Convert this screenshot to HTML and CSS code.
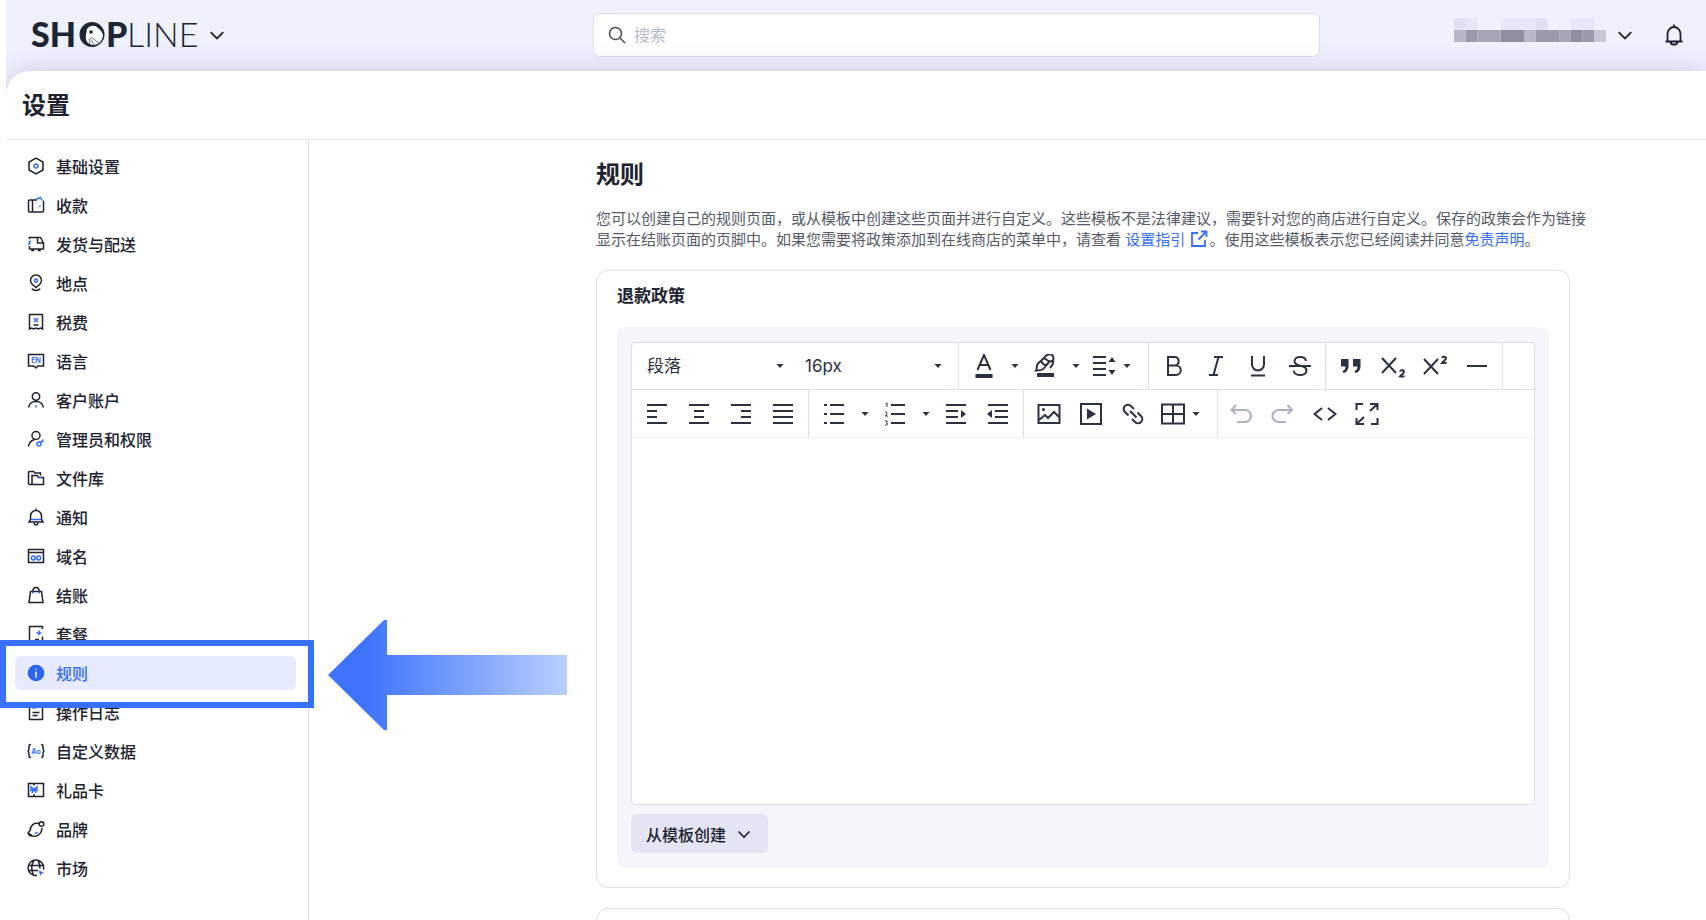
FILE: index.html
```html
<!DOCTYPE html>
<html lang="zh-CN">
    <head>
        <meta charset="UTF-8">
        <meta name="viewport" content="width=device-width, initial-scale=1.0">
        <title>设置 - 规则</title>
        <link rel="stylesheet" href="styles.css">
    </head>
    <body>
        <svg class="symbols" aria-hidden="true">
            <symbol id="chevron" viewBox="0 0 14 14"><path d="M1.5 4.5 7 10l5.500-5.500"/></symbol>
            <symbol id="caret" viewBox="0 0 8 6"><path d="M0.500 1h7L4 5z"/></symbol>
        </svg>

        <div class="app">
            <header class="topbar">
                <button class="brand" type="button" aria-label="SHOPLINE">
                    <svg class="logo" viewBox="0 -9 168 48">
                        <text class="logo-bold" x="0" y="27">SH</text>
                        <circle cx="61" cy="14.500" r="12.500" fill="#1d2733"/>
                        <path d="M56 9c3-4 8-4 11-1 3 2 5 5 5 8-1 5-4 9-10 9-6-1-8-5-7-10z" fill="#fff"/>
                        <circle cx="60" cy="12" r="1.800" fill="#1d2733"/>
                        <path d="M59 18l4 7M60 17l8 6M58 19l1 5" stroke="#1d2733" stroke-width=".6" fill="none"/>
                        <text class="logo-bold" x="75" y="27">P</text>
                        <text class="logo-light" x="96" y="27">LINE</text>
                    </svg>
                    <svg class="chevron" width="16" height="16"><use href="#chevron"/></svg>
                </button>
                <label class="search">
                    <svg width="18" height="18" viewBox="0 0 18 18"><circle cx="7.500" cy="7.500" r="6"/><path d="M12 12l5 5"/></svg>
                    <input type="search" placeholder="搜索" aria-label="搜索">
                </label>
                <div class="account">
                    <button class="user" type="button" aria-label="账户">
                        <svg class="user-mask" width="152" height="24" viewBox="0 0 156 24" preserveAspectRatio="none">
                            <path fill="#dfe1ee" d="M0 0h12v12H0zM84 0h12v12H84z"/>
                            <path fill="#e6e8f5" d="M12 0h12v12H12zM48 0h36v12H48zM120 0h24v12H120z"/>
                            <path fill="#b7b8c7" d="M0 12h12v12H0zM72 12h12v12H72z"/>
                            <path fill="#9a9aa8" d="M12 12h12v12H12zM84 12h24v12H84zM132 12h12v12H132z"/>
                            <path fill="#a5a6b4" d="M24 12h24v12H24zM108 12h12v12H108z"/>
                            <path fill="#8e8e9d" d="M48 12h24v12H48zM120 12h12v12H120z"/>
                            <path fill="#c6c7d6" d="M144 12h12v12H144z"/>
                        </svg>
                        <svg class="chevron" width="16" height="16"><use href="#chevron"/></svg>
                    </button>
                    <button class="bell" type="button" aria-label="通知">
                        <svg width="20" height="24" viewBox="0 0 20 24"><path d="M10 1.500v2M1.500 18.500h17M3.500 18.500V11a6.500 7 0 0 1 13 0v7.500M6.500 19c.5 3.500 6.500 3.500 7 0"/></svg>
                    </button>
                </div>
            </header>

            <div class="page">
                <h1 class="page-title">设置</h1>
                <div class="columns">
                    <nav class="sidebar">
                        <ul>
                            <li><a href="#"><svg viewBox="0 0 18 18"><path d="M9 1.200l7 3.800v8l-7 3.800L2 13V5z"/><circle class="blue" cx="9" cy="9" r="2"/></svg>基础设置</a></li>
                            <li><a href="#"><svg viewBox="0 0 18 18"><path d="M10 4H2.500a1 1 0 0 0-1 1v10a1 1 0 0 0 1 1h13a1 1 0 0 0 1-1V4.500M5.500 4v12"/><path class="blue" d="M8.500 3.500l5-2 1.500 3M13 9.500v1.500"/></svg>收款</a></li>
                            <li><a href="#"><svg viewBox="0 0 18 18"><path d="M2.500 4V2.500h8V8h6v6h-14v-3M10.500 2.500h3L16.500 8M5 14v1.500h1.500V14M11.500 14v1.500H13V14"/><path class="blue" d="M1 9h1.500V6.500h1.500"/></svg>发货与配送</a></li>
                            <li><a href="#"><svg viewBox="0 0 18 18"><path d="M9 13.500C5.500 11 3.500 9 3.500 6.500a5.500 5.500 0 0 1 11 0c0 2.500-2 4.500-5.500 7zM5 14.500c1 2.600 7 2.600 8 0"/><circle class="blue" cx="9" cy="6.700" r="1.600"/></svg>地点</a></li>
                            <li><a href="#"><svg viewBox="0 0 18 18"><path d="M2.500 16V1.500h13V16l-2-1-2 1-2.500-1-2.500 1-2-1zM6.500 12h5"/><path class="blue" d="M7 5l4 4M11 5L7 9"/></svg>税费</a></li>
                            <li><a href="#"><svg viewBox="0 0 18 18"><path d="M1.500 2.500h15v11.500h-5.500l-2 2-2-2H1.500z"/><text class="tiny" x="9" y="11">EN</text></svg>语言</a></li>
                            <li><a href="#"><svg viewBox="0 0 18 18"><circle cx="9" cy="5.500" r="3.700"/><path d="M1.500 16.500c.7-4 3.500-6 7.500-6s6.800 2 7.500 6"/><path class="blue" d="M9 14v2.500"/></svg>客户账户</a></li>
                            <li><a href="#"><svg viewBox="0 0 18 18"><circle cx="9" cy="5.500" r="4"/><path d="M1.500 16.500c.5-3.500 2.500-6 6-7"/><circle class="blue" cx="12" cy="14" r="2"/><path class="blue" d="M13.500 12.500l3-3M15 11l1.500 1"/></svg>管理员和权限</a></li>
                            <li><a href="#"><svg viewBox="0 0 18 18"><path d="M5 15.500H2.500a1 1 0 0 1-1-1v-11a1 1 0 0 1 1-1h4L8 4h5.500v2.500M5 15.500v-9h5l1.500 2h5v7z"/><path class="blue" d="M11.500 8.500h3"/></svg>文件库</a></li>
                            <li><a href="#"><svg viewBox="0 0 18 18"><path d="M9 0.500v2M3.500 11.500V8a5.500 5.500 0 0 1 11 0v3.500l1.500 2.500H2zM7 15c.5 2.500 3.500 2.500 4 0"/><path class="blue" d="M4 11.500h10"/></svg>通知</a></li>
                            <li><a href="#"><svg viewBox="0 0 18 18"><path d="M1.500 2.500h15v13h-15zM1.500 5.500h15"/><circle class="blue" cx="6.300" cy="11" r="1.900"/><circle class="blue" cx="11.700" cy="11" r="1.900"/></svg>域名</a></li>
                            <li><a href="#"><svg viewBox="0 0 18 18"><path d="M3.500 5.500h11l1.500 11H2zM5.800 5.500c0-5.500 6.400-5.500 6.400 0"/><path class="blue" d="M5.800 5.500v2M12.200 5.500v2"/></svg>结账</a></li>
                            <li><a href="#"><svg viewBox="0 0 18 18"><path d="M7 16.500H2.500v-15h13V4M15.500 11.500v5M8 14.500h4"/><path class="blue" d="M12 5.500v5M9.500 8h5"/></svg>套餐</a></li>
                            <li class="current">
                                <a href="#" aria-current="page"><svg viewBox="0 0 18 18"><circle class="solid" cx="9" cy="9" r="8.300"/><path class="white" d="M9 7.500v6M9 4.500v1.300"/></svg>规则</a>
                                <svg class="arrow" viewBox="0 0 240 112">
                                    <defs>
                                        <linearGradient id="fade" x1="0" x2="1" y1="0" y2="0">
                                            <stop offset="0.150" stop-color="#3d73fd"/>
                                            <stop offset="1" stop-color="#b9cffd"/>
                                        </linearGradient>
                                    </defs>
                                    <path fill="url(#fade)" d="M0 56L56 1h3v35h180v40H59v35h-3z"/>
                                </svg>
                            </li>
                            <li><a href="#"><svg viewBox="0 0 18 18"><path d="M2.500 1.500h13v15h-13zM5.500 9.500h7M5.500 12.500h5"/><path class="blue" d="M5.500 5h3"/></svg>操作日志</a></li>
                            <li><a href="#"><svg viewBox="0 0 18 18"><path d="M4 2.500c-2 0-2 .8-2 3C2 8 1.500 9 .5 9 1.500 9 2 10 2 12.500c0 2.200 0 3 2 3M14 2.500c2 0 2 .8 2 3 0 2.500.5 3.500 1.500 3.500-1 0-1.500 1-1.500 3.500 0 2.200 0 3-2 3"/><text class="tiny" x="9" y="11.500">Ao</text></svg>自定义数据</a></li>
                            <li><a href="#"><svg viewBox="0 0 18 18"><path d="M1.500 2.500h15v13h-15zM7 2.500v2M7 13v2.500"/><path class="blue" d="M7 8L4 6v3.500zM7 8l3-2v3.500zM7 8l-2 4M7 8l2 4"/></svg>礼品卡</a></li>
                            <li><a href="#"><svg viewBox="0 0 18 18"><path d="M12 3.500C7 2.500 3.500 5 3 10.500L1 13l1.500 2.500c6 2 12 0 12.500-7.500M1.500 13.500l3.500 2"/><circle cx="14.500" cy="4" r="2.300"/><path class="blue" d="M8 13.500c1 0 2-.5 2.500-1.500"/></svg>品牌</a></li>
                            <li><a href="#"><svg viewBox="0 0 18 18"><path d="M10 16.500a7.800 7.800 0 1 1 6.500-6M1.500 6.500h14.500M1.500 11.500H11M7 16.500c-3-4-3-11 0-15M11 1.500c1.500 2.500 2 5 2 8"/><path class="solid" d="M11.500 11.500l5.500 2-2.500 1-1 2.500z"/></svg>市场</a></li>
                        </ul>
                    </nav>

                    <main class="content">
                        <h2>规则</h2>
                        <p class="intro">您可以创建自己的规则页面，或从模板中创建这些页面并进行自定义。这些模板不是法律建议，需要针对您的商店进行自定义。保存的政策会作为链接<br>显示在结账页面的页脚中。如果您需要将政策添加到在线商店的菜单中，请查看 <a href="#">设置指引 <svg width="18" height="18" viewBox="0 0 18 18"><path d="M8 3H2v13h13v-6M11 1.500h5.500V7M16 2L8.500 9.500"/></svg></a>。使用这些模板表示您已经阅读并同意<a href="#">免责声明</a>。</p>

                        <section class="card">
                            <h3>退款政策</h3>
                            <div class="panel">
                                <div class="editor">
                                    <div class="toolbar">
                                        <div class="group group-selects">
                                            <div class="picker">
                                                <select aria-label="段落格式"><option>段落</option></select>
                                                <svg class="caret"><use href="#caret"/></svg>
                                            </div>
                                            <div class="picker">
                                                <select aria-label="字号"><option>16px</option></select>
                                                <svg class="caret"><use href="#caret"/></svg>
                                            </div>
                                        </div>
                                        <div class="group">
                                            <button type="button" aria-label="文字颜色"><svg class="icon" viewBox="0 0 24 24"><path d="M5.500 16L12 1l6.500 15M7.800 11h8.400"/><path class="fill" d="M3.500 20h17v4h-17z"/></svg></button>
                                            <button class="more" type="button" aria-label="更多颜色"><svg class="caret"><use href="#caret"/></svg></button>
                                            <button type="button" aria-label="背景颜色"><svg class="icon" viewBox="0 0 24 24"><path d="M11 4c3-5 9-5 9.500 0 .3 3-3 4-5 3zM11 4L5 9.500c-2 2-.5 5-2 7 4 0 6 0 7.500-2L16 8M8 7.500l5 5M20 6c1 3 0 5-3 8"/><path class="fill" d="M4 19h17v4H4z"/></svg></button>
                                            <button class="more" type="button" aria-label="更多背景颜色"><svg class="caret"><use href="#caret"/></svg></button>
                                            <button class="menu" type="button" aria-label="行高"><svg class="icon" viewBox="0 0 24 24"><path d="M1 3h13M1 9h13M1 15h13M1 21h13"/><path class="fill" d="M16.500 8L20 3l3.500 5zM16.500 16l3.500 5 3.500-5z"/></svg><svg class="caret"><use href="#caret"/></svg></button>
                                        </div>
                                        <div class="group">
                                            <button type="button" aria-label="粗体"><svg class="icon" viewBox="0 0 24 24"><path d="M6 3h7a4.300 4.300 0 0 1 0 8.500H6zM6 11.500h8a4.700 4.700 0 0 1 0 9.500H6z"/></svg></button>
                                            <button type="button" aria-label="斜体"><svg class="icon" viewBox="0 0 24 24"><path d="M10 3h9M5 21h9M14.500 3l-5 18"/></svg></button>
                                            <button type="button" aria-label="下划线"><svg class="icon" viewBox="0 0 24 24"><path d="M6 2v8.500a6 6 0 0 0 12 0V2M5 21.500h14"/></svg></button>
                                            <button type="button" aria-label="删除线"><svg class="icon" viewBox="0 0 24 24"><path d="M18 7c-.5-5-11.500-5.500-11.500 0 0 3 3 4 5.500 4.500M1 12h22M13 12c3 .6 5.500 2 5.500 4.500 0 6-12.500 6-12.800 0"/></svg></button>
                                        </div>
                                        <div class="group">
                                            <button type="button" aria-label="引用"><svg class="icon" viewBox="0 0 24 24"><path class="fill" d="M2 5h7.500v7c0 4-2 6.500-5 7l-1-2c2-.8 3-2 3-4.500H2zM14 5h7.500v7c0 4-2 6.500-5 7l-1-2c2-.8 3-2 3-4.500H14z"/></svg></button>
                                            <button type="button" aria-label="下标"><svg class="icon" viewBox="0 0 24 24"><path d="M1 4l14 15M15 4L1 19M19 17.500c.5-2 4-1.700 4 .3 0 1.500-3 3-4 4.700h4.500"/></svg></button>
                                            <button type="button" aria-label="上标"><svg class="icon" viewBox="0 0 24 24"><path d="M1 5l14 15M15 5L1 20M19 4c.5-2 4-1.700 4 .3 0 1.500-3 3-4 4.700h4.500"/></svg></button>
                                            <button type="button" aria-label="分割线"><svg class="icon" viewBox="0 0 24 24"><path d="M2 12h20"/></svg></button>
                                        </div>
                                    </div>
                                    <div class="toolbar toolbar-last">
                                        <div class="group">
                                            <button type="button" aria-label="左对齐"><svg class="icon" viewBox="0 0 24 24"><path d="M2 3h20M2 9h10M2 15h10M2 21h20"/></svg></button>
                                            <button type="button" aria-label="居中"><svg class="icon" viewBox="0 0 24 24"><path d="M2 3h20M7 9h10M7 15h10M2 21h20"/></svg></button>
                                            <button type="button" aria-label="右对齐"><svg class="icon" viewBox="0 0 24 24"><path d="M2 3h20M12 9h10M12 15h10M2 21h20"/></svg></button>
                                            <button type="button" aria-label="两端对齐"><svg class="icon" viewBox="0 0 24 24"><path d="M2 3h20M2 9h20M2 15h20M2 21h20"/></svg></button>
                                        </div>
                                        <div class="group">
                                            <button type="button" aria-label="项目符号"><svg class="icon" viewBox="0 0 24 24"><path d="M8 3h14M8 12h14M8 21h14M2 3h3M2 12h3M2 21h3"/></svg></button>
                                            <button class="more" type="button" aria-label="更多符号"><svg class="caret"><use href="#caret"/></svg></button>
                                            <button type="button" aria-label="编号"><svg class="icon" viewBox="0 0 24 24"><path d="M8 3h14M8 12h14M8 21h14"/><path class="thin" d="M2.500 2L4 1v4M2 10.500c1-1 2.500-.5 2 .8L2.500 14H5M2 19c3-1 3 1.500 1 2 2.500 0 2 3-1 2"/></svg></button>
                                            <button class="more" type="button" aria-label="更多编号"><svg class="caret"><use href="#caret"/></svg></button>
                                            <button type="button" aria-label="增加缩进"><svg class="icon" viewBox="0 0 24 24"><path d="M2 3h20M2 9h12M2 15h12M2 21h20"/><path class="fill" d="M17 8l5 4-5 4z"/></svg></button>
                                            <button type="button" aria-label="减少缩进"><svg class="icon" viewBox="0 0 24 24"><path d="M2 3h20M9 9h13M9 15h13M2 21h20"/><path class="fill" d="M6 8l-5 4 5 4z"/></svg></button>
                                        </div>
                                        <div class="group">
                                            <button type="button" aria-label="图片"><svg class="icon" viewBox="0 0 24 24"><path d="M1.500 3h21v18h-21zM2 18l6-5 3 3 6-6 5 5"/><circle class="fill" cx="6.500" cy="7.500" r="1.500"/></svg></button>
                                            <button type="button" aria-label="视频"><svg class="icon" viewBox="0 0 24 24"><path d="M2 2h20v20H2z"/><path class="fill" d="M8 6.500l9 5.500-9 5.500z"/></svg></button>
                                            <button type="button" aria-label="链接"><svg class="icon" viewBox="0 0 24 24"><path d="M7.500 13.500L4 10c-4-4 2-10 6-6l3 3M16.500 10.500L20 14c4 4-2 10-6 6l-3-3M9 9l6.500 6.500"/></svg></button>
                                            <button class="menu" type="button" aria-label="表格"><svg class="icon" viewBox="0 0 24 24"><path d="M1 2.500h22v19H1zM12 2.500v19M1 12h22"/></svg><svg class="caret"><use href="#caret"/></svg></button>
                                        </div>
                                        <div class="group group-end">
                                            <button type="button" aria-label="撤销" disabled><svg class="icon" viewBox="0 0 24 24"><path d="M2.500 8H16a6 6 0 0 1 0 12H8M7 3L2.500 8 7 12"/></svg></button>
                                            <button type="button" aria-label="重做" disabled><svg class="icon" viewBox="0 0 24 24"><path d="M21 8H7.500a6 6 0 0 0 0 12H15M16.500 3L21 8l-4.500 4"/></svg></button>
                                            <button type="button" aria-label="源代码"><svg class="icon" viewBox="0 0 24 24"><path d="M9 6l-7.500 6L9 18M15 6l7.500 6L15 18"/></svg></button>
                                            <button type="button" aria-label="全屏"><svg class="icon" viewBox="0 0 24 24"><path d="M1.500 8V2H8M22.500 16v6H16M15 2h7.500v6M22 2.500L15 9M9 22H1.500v-6M2 21.500L9 15"/></svg></button>
                                        </div>
                                    </div>
                                    <textarea aria-label="退款政策"></textarea>
                                </div>
                                <button class="template" type="button">从模板创建 <svg class="chevron" width="14" height="14"><use href="#chevron"/></svg></button>
                            </div>
                        </section>

                        <section class="card"></section>
                    </main>
                </div>
            </div>
        </div>
    </body>
</html>
```

FILE: styles.css
```css
* {
    box-sizing: border-box;
}

body {
    margin: 0;
    overflow: hidden;
    background-color: #ffffff;
    color: #20232f;
    font-family: Inter, "Noto Sans CJK SC", sans-serif;
    font-size: 16px;
}

h1, h2, h3, p, ul {
    margin: 0;
    padding: 0;
}

button, input, select, textarea {
    margin: 0;
    padding: 0;
    border: none;
    background: none;
    color: inherit;
    font: inherit;
}

button {
    cursor: pointer;
}

a {
    color: #356dff;
    text-decoration: none;
}

svg {
    flex: none;
    fill: none;
    stroke: currentColor;
}

.symbols {
    position: absolute;
    width: 0;
    height: 0;
}

.chevron {
    stroke-width: 1.6;
}

.app {
    display: flex;
    flex-direction: column;
    height: 100vh;
    padding-left: 6px;
    background: linear-gradient(to right, #ffffff 6px, #eff1ff 6px);
}

/* Top bar */
.topbar {
    display: grid;
    grid-template-columns: 34fr 44fr 22fr;
    align-items: center;
    flex: none;
    height: 71px;
    padding: 0 22px 2px 25px;
}

.brand {
    display: flex;
    align-items: center;
    gap: 10px;
    justify-self: start;
}

.logo {
    width: 168px;
    height: 48px;
    stroke: none;
}

.logo text {
    fill: #1d2733;
    font-family: Lato, sans-serif;
    font-size: 34px;
}

.logo .logo-bold {
    font-weight: 900;
}

.logo .logo-light {
    font-weight: 300;
}

.search {
    display: flex;
    align-items: center;
    gap: 8px;
    height: 44px;
    padding: 0 14px;
    border: 1px solid #dcdee9;
    border-radius: 6px;
    background-color: #ffffff;
    color: #4b505d;
}

.search svg {
    stroke-width: 1.6;
}

.search input {
    flex: 1;
    outline: none;
}

.search input::placeholder {
    color: #b4b9c8;
}

.account {
    display: flex;
    align-items: center;
    justify-self: end;
    gap: 31px;
}

.user {
    display: flex;
    align-items: center;
    gap: 11px;
}

.user-mask {
    margin-bottom: 10px;
    stroke: none;
}

.bell svg {
    display: block;
    stroke-width: 1.8;
}

/* Page */
.page {
    position: relative;
    z-index: 0;
    display: flex;
    flex: 1;
    flex-direction: column;
    min-height: 0;
    border-top-left-radius: 24px;
    background-color: #ffffff;
}

/* Shadow towards the top bar only */
.page::before {
    content: "";
    position: absolute;
    z-index: -1;
    inset: 0;
    border-top-left-radius: 24px;
    box-shadow: 0 0 28px rgba(60, 60, 100, 0.2);
    clip-path: inset(-40px 0 0 0);
}

.page-title {
    flex: none;
    height: 69px;
    padding-left: 16px;
    border-bottom: 1px solid #e6e7ee;
    font-size: 24px;
    line-height: 70px;
}

.columns {
    display: flex;
    flex: 1;
    min-height: 0;
}

/* Sidebar */
.sidebar {
    z-index: 1;
    flex: none;
    width: 303px;
    padding: 9px 12px 0 9px;
    border-right: 1px solid #dfe0e6;
}

.sidebar ul {
    display: flex;
    flex-direction: column;
    gap: 5px;
    list-style: none;
}

.sidebar a {
    position: relative;
    display: flex;
    align-items: center;
    gap: 11px;
    height: 34px;
    padding-left: 12px;
    border-radius: 6px;
    color: #20232f;
    font-weight: 500;
}

.sidebar a svg {
    width: 18px;
    height: 18px;
    stroke-width: 1.5;
}

.sidebar .blue {
    stroke: #356dff;
}

.sidebar .white {
    stroke: #ffffff;
}

.sidebar .solid {
    fill: #2b62fa;
    stroke: none;
}

.sidebar .tiny {
    fill: #356dff;
    stroke: none;
    font-size: 7px;
    font-weight: 700;
    text-anchor: middle;
}

.sidebar .current {
    position: relative;
    z-index: 1;
}

/* Frame drawn around the current item */
.current::before {
    content: "";
    position: absolute;
    top: -16px;
    right: -18px;
    bottom: -18px;
    left: -15px;
    border: 6px solid #3870ff;
    background-color: #ffffff;
}

.sidebar .current a {
    background-color: #e7ebff;
    color: #356dff;
}

.arrow {
    position: absolute;
    top: -37px;
    left: 313px;
    width: 240px;
    height: 112px;
    stroke: none;
}

/* Content */
.content {
    flex: 1;
    min-width: 0;
    padding: 17px 136px 0 287px;
    overflow: auto;
    scrollbar-width: none;
}

.content h2 {
    font-size: 24px;
    line-height: 36px;
}

.intro {
    margin: 15px 0 20px;
    color: #555a68;
    font-size: 15px;
    line-height: 21px;
    white-space: nowrap;
}

.intro svg {
    margin: 0 1px;
    stroke-width: 1.8;
    vertical-align: -3px;
}

.card {
    min-height: 120px;
    margin-bottom: 20px;
    padding: 12px 20px 19px;
    border: 1px solid #dfe0e8;
    border-radius: 12px;
}

.card h3 {
    margin-bottom: 18px;
    font-size: 17px;
    line-height: 26px;
}

.panel {
    padding: 15px 14px;
    border-radius: 8px;
    background-color: #f5f6fb;
}

/* Editor */
.editor {
    margin-bottom: 9px;
    border: 1px solid #dddfe8;
    border-radius: 4px;
    background-color: #ffffff;
    color: #2b3140;
}

.toolbar {
    display: flex;
    height: 47px;
    border-bottom: 1px solid #dddfe8;
}

.toolbar-last {
    height: 48px;
    border-bottom-color: #f0f1f5;
}

.group {
    display: flex;
    padding: 0 4px;
    border-right: 1px solid #dddfe8;
}

.group-end {
    padding: 0 2px;
    border-right: none;
}

.group-selects {
    padding-right: 6px;
}

.group button {
    display: flex;
    align-items: center;
    justify-content: center;
    width: 42px;
}

.group .more {
    width: 19px;
}

.group .menu {
    gap: 7px;
    width: 59px;
    padding-right: 6px;
}

.group button:disabled {
    color: #adb3c2;
}

.icon {
    width: 24px;
    height: 24px;
    stroke-width: 2;
}

.icon .fill {
    fill: currentColor;
    stroke: none;
}

.icon .thin {
    stroke-width: 1;
}

.caret {
    width: 8px;
    height: 6px;
    fill: currentColor;
    stroke: none;
}

.picker {
    display: grid;
    align-items: center;
    width: 158px;
}

.picker select, .picker .caret {
    grid-area: 1 / 1;
}

.picker select {
    height: 100%;
    padding-left: 11px;
    appearance: none;
    font-size: 17px;
}

.picker .caret {
    justify-self: end;
    margin-right: 10px;
    pointer-events: none;
}

.editor textarea {
    display: block;
    width: 100%;
    height: 366px;
    padding: 16px;
    outline: none;
    resize: none;
}

.template {
    display: flex;
    align-items: center;
    gap: 11px;
    height: 39px;
    padding: 0 17px 0 15px;
    border-radius: 6px;
    background-color: #e3e5f2;
    font-weight: 500;
}
```
